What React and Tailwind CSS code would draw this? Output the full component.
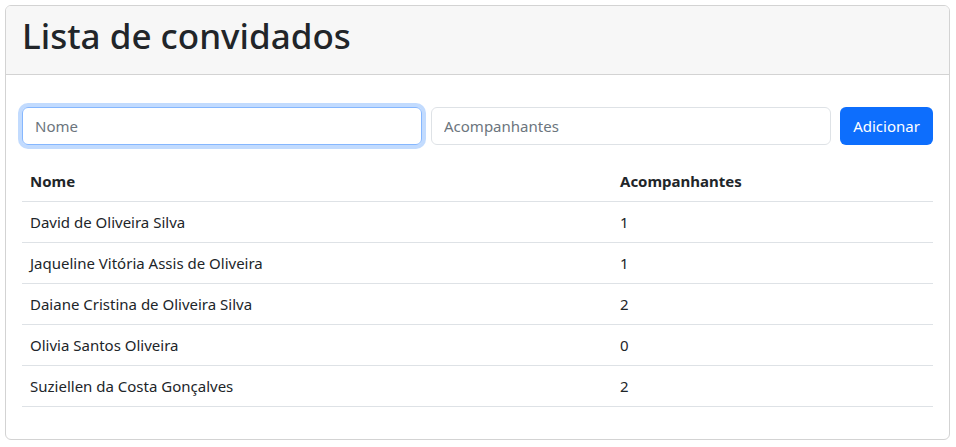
const guests = [
  { name: 'David de Oliveira Silva', plus: 1 },
  { name: 'Jaqueline Vitória Assis de Oliveira', plus: 1 },
  { name: 'Daiane Cristina de Oliveira Silva', plus: 2 },
  { name: 'Olivia Santos Oliveira', plus: 0 },
  { name: 'Suziellen da Costa Gonçalves', plus: 2 },
]

export default function App() {
  return (
    <div className="min-h-screen bg-white p-[5px] font-['Noto_Sans',sans-serif] text-[15px] leading-6 text-[#212529]">
      <div className="w-[945px] overflow-hidden rounded-md border border-[#d3d3d3]">
        <div className="border-b border-[#d3d3d3] bg-[#f7f7f7] px-4 pt-2 pb-[17px]">
          <h1 className="text-[35px] font-medium leading-[43px]">Lista de convidados</h1>
        </div>
        <div className="p-4">
          <form className="mt-4 flex gap-[9px]" onSubmit={(e) => e.preventDefault()}>
            <input
              className="h-[38px] flex-1 rounded-md border border-[#86b7fe] px-3 text-[#212529] placeholder-[#6c757d] shadow-[0_0_0_4px_rgba(13,110,253,0.25)] outline-none"
              placeholder="Nome"
            />
            <input
              className="h-[38px] flex-1 rounded-md border border-[#dee2e6] px-3 placeholder-[#6c757d] outline-none"
              placeholder="Acompanhantes"
            />
            <button type="submit" className="h-[38px] w-[93px] rounded-md bg-[#0d6efd] text-white">
              Adicionar
            </button>
          </form>
          <table className="mt-4 mb-4 w-full border-collapse text-left">
            <thead>
              <tr className="border-b border-[#dee2e6]">
                <th className="w-[590px] p-2 font-bold">Nome</th>
                <th className="p-2 font-bold">Acompanhantes</th>
              </tr>
            </thead>
            <tbody>
              {guests.map((g) => (
                <tr key={g.name} className="border-b border-[#dee2e6]">
                  <td className="p-2">{g.name}</td>
                  <td className="p-2">{g.plus}</td>
                </tr>
              ))}
            </tbody>
          </table>
        </div>
      </div>
    </div>
  )
}
